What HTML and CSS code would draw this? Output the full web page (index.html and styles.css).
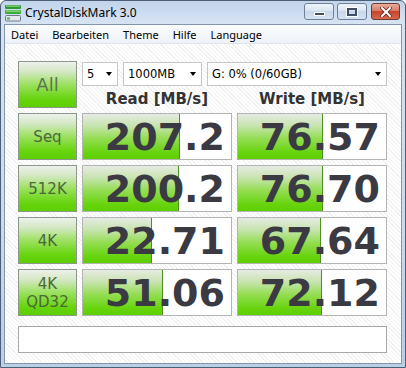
FILE: index.html
```html
<!DOCTYPE html>
<html lang="de">
<head>
    <meta charset="UTF-8">
    <meta name="viewport" content="width=device-width, initial-scale=1.0">
    <title>CrystalDiskMark 3.0</title>
    <link rel="stylesheet" href="styles.css">
</head>
<body>
    <div class="window">
        <!-- Title bar -->
        <div class="titlebar">
            <svg class="app-icon" viewBox="0 0 18 18" width="18" height="18">
                <rect x="1" y="1" width="16" height="4" rx="1" fill="#2f9a34"/>
                <rect x="2" y="1.5" width="14" height="1.2" fill="#8fdc7c"/>
                <rect x="1" y="6" width="16" height="4" rx="1" fill="#3aab3c"/>
                <rect x="2" y="6.5" width="14" height="1.2" fill="#9be486"/>
                <rect x="1.5" y="11.5" width="15" height="5.5" rx="1" fill="#e4e8ec" stroke="#6f7a86"/>
                <rect x="3" y="13.5" width="3" height="2" fill="#45b53f"/>
            </svg>
            <span class="title">CrystalDiskMark 3.0</span>
            <div class="caption-buttons">
                <span class="cap-btn"><span class="min-glyph"></span></span>
                <span class="cap-btn"><span class="max-glyph"></span></span>
                <span class="cap-btn close">
                    <svg viewBox="0 0 12 10" width="12" height="10">
                        <path d="M2 1 L10 9 M10 1 L2 9" stroke="#5a2a22" stroke-width="3.6" stroke-linecap="square"/>
                        <path d="M2 1 L10 9 M10 1 L2 9" stroke="#fff" stroke-width="2" stroke-linecap="square"/>
                    </svg>
                </span>
            </div>
        </div>

        <div class="frame-inner">
            <!-- Menu bar -->
            <div class="menubar">
                <span class="menu-item">Datei</span>
                <span class="menu-item">Bearbeiten</span>
                <span class="menu-item">Theme</span>
                <span class="menu-item">Hilfe</span>
                <span class="menu-item">Language</span>
            </div>

            <div class="client">
                <div class="bench">
                    <div class="label-btn all">All</div>
                    <div class="controls">
                        <div class="selects">
                            <div class="select count">5 <span class="arrow"></span></div>
                            <div class="select size">1000MB <span class="arrow"></span></div>
                            <div class="select drive">G: 0% (0/60GB) <span class="arrow"></span></div>
                        </div>
                        <div class="headers">
                            <span>Read [MB/s]</span>
                            <span>Write [MB/s]</span>
                        </div>
                    </div>

                    <!-- Seq -->
                    <div class="label-btn">Seq</div>
                    <div class="cell"><div class="bar" style="width: 97px"></div><div class="value">207.2</div></div>
                    <div class="cell"><div class="bar" style="width: 85px"></div><div class="value">76.57</div></div>

                    <!-- 512K -->
                    <div class="label-btn">512K</div>
                    <div class="cell"><div class="bar" style="width: 96px"></div><div class="value">200.2</div></div>
                    <div class="cell"><div class="bar" style="width: 85px"></div><div class="value">76.70</div></div>

                    <!-- 4K -->
                    <div class="label-btn">4K</div>
                    <div class="cell"><div class="bar" style="width: 69px"></div><div class="value">22.71</div></div>
                    <div class="cell"><div class="bar" style="width: 83px"></div><div class="value">67.64</div></div>

                    <!-- 4K QD32 -->
                    <div class="label-btn">4K<br>QD32</div>
                    <div class="cell"><div class="bar" style="width: 80px"></div><div class="value">51.06</div></div>
                    <div class="cell"><div class="bar" style="width: 84px"></div><div class="value">72.12</div></div>
                </div>

                <div class="status"></div>
            </div>
        </div>
    </div>
</body>
</html>
```

FILE: styles.css
```css
/* General page styles */
* {
    box-sizing: border-box;
}

body {
    margin: 0;
    font-family: "DejaVu Sans", Verdana, sans-serif;
    background-color: #fff;
}

/* Window frame */
.window {
    width: 406px;
    height: 368px;
    border: 1px solid #4d5f76;
    border-radius: 6px 6px 0 0;
    background: linear-gradient(to bottom, #c2d4eb, #d6e3f3 22px, #c9dbef 60%, #b8cfe6);
    padding: 0 3px 3px;
    display: flex;
    flex-direction: column;
}

.titlebar {
    height: 23px;
    display: flex;
    align-items: center;
}

.app-icon {
    display: block;
}

.title {
    margin-left: 3px;
    font-family: "Noto Sans", sans-serif;
    font-size: 12px;
    color: #000;
}

.caption-buttons {
    margin-left: auto;
    margin-right: 2px;
    align-self: flex-start;
    margin-top: 2px;
    display: flex;
    gap: 3px;
}

.cap-btn {
    width: 30px;
    height: 17px;
    border: 1px solid #6f8096;
    border-radius: 3px;
    background: linear-gradient(to bottom, #eef3f9, #d9e4f1 50%, #c7d7ea 50%, #d5e3f3);
    display: flex;
    align-items: center;
    justify-content: center;
}

.cap-btn.close {
    width: 29px;
    margin-left: 1px;
    border-color: #6e3b31;
    background: linear-gradient(to bottom, #e9ac9c, #d87560 50%, #c6452b 50%, #d5684d);
}

.min-glyph {
    width: 11px;
    height: 4px;
    margin-top: 5px;
    background-color: #3f4e62;
    border: 1px solid #fff;
}

.max-glyph {
    width: 10px;
    height: 8px;
    border: 2px solid #3f4e62;
    outline: 1px solid #fff;
}

.frame-inner {
    flex: 1;
    display: flex;
    flex-direction: column;
    border: 1px solid #8396ad;
}

/* Menu bar */
.menubar {
    height: 19px;
    display: flex;
    align-items: center;
    background: linear-gradient(to bottom, #fbfcfe, #eef2f8);
    border-bottom: 1px solid #dfe5ee;
}

.menu-item {
    padding: 0 7px 0 6px;
    margin-right: 1px;
    font-family: "Noto Sans", sans-serif;
    font-size: 11px;
    color: #000;
}

/* Client area */
.client {
    flex: 1;
    padding: 17px 0 0 13px;
    background: repeating-linear-gradient(45deg, #ffffff 0 2px, #f1f1f1 2px 3px);
}

.bench {
    display: grid;
    grid-template-columns: 59px 150px 150px;
    grid-template-rows: repeat(5, 47px);
    gap: 5px;
}

.label-btn {
    border: 1px solid #8d978a;
    background: linear-gradient(to bottom, #eef1ec 0%, #d3e8c2 22%, #98e05a 52%, #68d40e 82%, #5dcf00 100%);
    color: #4a6838;
    font-size: 15px;
    line-height: 1.2;
    display: flex;
    align-items: center;
    justify-content: center;
    text-align: center;
}

.label-btn.all {
    font-size: 18px;
    color: #5b7651;
}

.controls {
    grid-column: 2 / 4;
    display: flex;
    flex-direction: column;
}

.selects {
    margin-top: 1px;
    display: flex;
    gap: 5px;
}

.select {
    height: 24px;
    padding: 0 5px 0 4px;
    border: 1px solid #c6c6c6;
    background-color: #fff;
    display: flex;
    align-items: center;
    font-size: 11.5px;
    color: #000;
}

.select.count {
    width: 36px;
}

.select.size {
    width: 79px;
}

.select.drive {
    flex: 1;
}

.select .arrow {
    margin-left: auto;
    width: 0;
    height: 0;
    border-left: 3.5px solid transparent;
    border-right: 3.5px solid transparent;
    border-top: 4px solid #000;
}

.headers {
    flex: 1;
    display: grid;
    grid-template-columns: 150px 150px;
    column-gap: 5px;
    align-items: end;
}

.headers span {
    text-align: center;
    font-weight: bold;
    font-size: 15px;
    line-height: 18px;
    color: #333;
}

/* Result cells */
.cell {
    border: 1px solid #b4b4b4;
    background-color: #fff;
    display: grid;
}

.cell > * {
    grid-area: 1 / 1;
}

.bar {
    background: linear-gradient(to bottom, #e6ebe2 0%, #c9e4b3 25%, #93dd52 55%, #68d40e 85%, #5ecf00 100%);
    border-right: 1px solid #4e8f22;
}

.value {
    align-self: center;
    text-align: right;
    padding-right: 6px;
    font-weight: bold;
    font-size: 38px;
    line-height: 1;
    color: #3b3a42;
}

.status {
    width: 369px;
    height: 27px;
    margin-top: 10px;
    border: 1px solid #a9a9a9;
    background-color: #fff;
}
```
